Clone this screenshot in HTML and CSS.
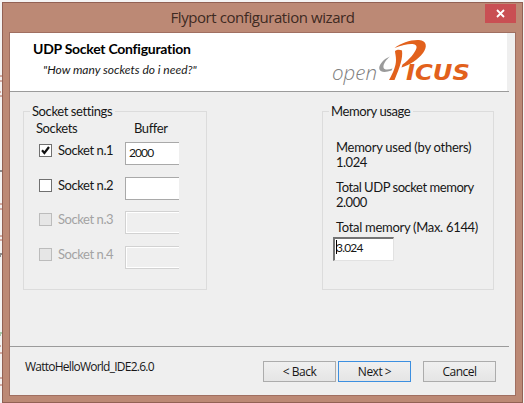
FILE: index.html
```
<!DOCTYPE html>
<html lang="en">
<head>
<meta charset="utf-8">
<title>Flyport configuration wizard</title>
<link rel="stylesheet" href="styles.css">
</head>
<body>
<svg class="backdrop" width="3" height="403" viewBox="0 0 3 403"><path d="M0 76h2M0 81h2M0 92h1M0 96h2M0 204h2M0 209h2M0 236h2M0 240h2M0 346h1M0 353h2M0 378h2M0 385h2" stroke="#b06050"/><path d="M0 171h2M0 254h2M0 256h1" stroke="#222"/><path d="M0 333h2M0 335h1" stroke="#58a060"/></svg>
<main class="window">
  <header class="titlebar">
    <h1>Flyport configuration wizard</h1>
    <button class="close" aria-label="Close"><svg width="9" height="9" viewBox="0 0 9 9"><path d="M1 1l7 7M8 1l-7 7" stroke="#fff" stroke-width="1.8"/></svg></button>
  </header>
  <section class="client">
    <div class="banner">
      <div class="heading">
        <h2>UDP Socket Configuration</h2>
        <p>"How many sockets do i need?"</p>
      </div>
      <svg class="logo" width="142" height="50" viewBox="330 36 142 50">
        <text class="logo-open" x="332" y="80" textLength="45" lengthAdjust="spacingAndGlyphs">open</text>
        <path d="M390 56.5C383 59 378 66 379.5 69.5C380.5 72.5 386 72.5 391.5 70.5L392.5 68.5C388 70 384 70 383.5 67.5C383 64 386 60 390 56.5Z" fill="#9a9a9a"/>
        <path d="M395 51C397.500 49 400 49.500 402 50.500C403 58 400 67 394.500 80H389C393 73 396 66 396 60C396 56 395 53 395 51Z" fill="#e2611c"/>
        <path d="M394.500 48C401 43 411 39.500 419 40C427 40.500 427.500 47 423 53C418 60 409 65 401.500 67.500L402.500 64.500C409 60 415 53 416.500 48C417.500 42.500 408 43 394.500 48Z" fill="#e2611c"/>
        <text class="logo-caps" x="406" y="80" textLength="64" lengthAdjust="spacingAndGlyphs">ICUS</text>
      </svg>
    </div>
    <div class="body">
      <fieldset class="group sockets">
        <legend>Socket settings</legend>
        <div class="cols"><span>Sockets</span><span>Buffer</span></div>
        <div class="row"><i class="check"><svg width="11" height="11" viewBox="0 0 11 11"><path d="M2 5.2L4.400 8L9 2" fill="none" stroke="#111" stroke-width="2.200"/></svg></i><label>Socket n.1</label><div class="field">2000</div></div>
        <div class="row"><i class="check"></i><label>Socket n.2</label><div class="field"></div></div>
        <div class="row off"><i class="check"></i><label>Socket n.3</label><div class="field"></div></div>
        <div class="row off"><i class="check"></i><label>Socket n.4</label><div class="field"></div></div>
      </fieldset>
      <fieldset class="group memory">
        <legend>Memory usage</legend>
        <dl>
          <dt class="used">Memory used (by others)</dt><dd>1.024</dd>
          <dt class="udp">Total UDP socket memory</dt><dd>2.000</dd>
          <dt class="max">Total memory (Max. 6144)</dt>
        </dl>
        <div class="total"><i class="caret"></i>3.024</div>
      </fieldset>
    </div>
    <footer>
      <span class="project">WattoHelloWorld_IDE2.6.0</span>
      <button class="btn">&lt; Back</button>
      <button class="btn next">Next &gt;</button>
      <button class="btn cancel">Cancel</button>
    </footer>
  </section>
</main>
</body>
</html>
```
FILE: styles.css
```
* { box-sizing: border-box; }
body { margin: 0; width: 524px; height: 403px; overflow: hidden; background: #f4f3f3; padding: 2px 1px 0 2px; font: 13px/15px Lato, "Liberation Sans", sans-serif; color: #171717; }
h1, h2, p, dl, dd { margin: 0; font-weight: 400; }
i { font-style: normal; }
button { font: inherit; padding: 0; margin: 0; border-radius: 0; }
.backdrop { position: absolute; left: 0; top: 0; }
.window { position: relative; width: 521px; height: 401px; background: #bc8975; border: 1px solid #926154; padding: 0 6px 6px; }
.titlebar { height: 29px; display: flex; justify-content: center; position: relative; }
h1 { font: 15px/28px "Open Sans", sans-serif; color: #3e2a22; white-space: nowrap; letter-spacing: -.43px; }
.close { position: absolute; right: 0; top: 1px; width: 31px; height: 19px; border: 0; background: #c94f53; display: flex; align-items: center; justify-content: center; }
.client { height: 364px; border: 1px solid #a06f61; background: #efefef; display: flex; flex-direction: column; }
.banner { height: 59px; flex: none; background: linear-gradient(#fff, #fff) 0 0 / 497px 58px no-repeat; display: flex; position: relative; }
.banner::after, footer::before { content: ""; position: absolute; left: 0; bottom: 0; width: 499px; height: 1px; background: #9b9b9b; }
.heading { padding: 7px 0 0 23px; width: 320px; white-space: nowrap; }
h2 { font-size: 14px; line-height: 18px; font-weight: 700; color: #000; letter-spacing: -.26px; }
.heading p { font-size: 12px; line-height: 16px; font-style: italic; margin: 4px 0 0 10px; }
.logo { margin-top: 3px; flex: none; }
.logo-open { font: italic 300 20px "Open Sans"; fill: #808080; }
.logo-caps { font: italic 700 22px "DejaVu Sans"; fill: #e2611c; }
.body { display: flex; padding: 11px 0 0 13px; gap: 115px; height: 254px; flex: none; white-space: nowrap; }
.group { margin: 0; padding: 0; height: 187px; min-width: 0; border: 1px solid #dcdcdc; }
.sockets { width: 184px; }
.memory { width: 172px; }
legend { padding: 0 3px 0 2px; margin-left: 6px; height: 16px; line-height: 16px; letter-spacing: -.4px; }
.cols { display: flex; height: 23px; padding-left: 12px; line-height: 19px; letter-spacing: -.4px; }
.cols span:first-child { width: 98px; }
.row { display: flex; height: 34.5px; padding-left: 15px; align-items: flex-start; }
.check { width: 13px; height: 13px; border: 1px solid #707070; background: #fff; margin-top: 2px; flex: none; display: block; }
.check svg { display: block; }
.row label { width: 67px; margin-left: 6px; line-height: 17px; letter-spacing: -.43px; }
.field { width: 54px; height: 23px; border: 1px solid #a9a9a9; border-right: 0; background: #fff; padding: 0 3px; font-size: 12px; line-height: 20px; letter-spacing: -.9px; }
.off { color: #a3a3a3; }
.off .check { border-color: #bcbcbc; background: #e6e6e6; }
.off .field { border-color: #d2d2d2; background: #efefef; }
.off .field { box-shadow: inset 1px 1px #fff, inset 0 -1px #fff; }
dl { padding: 21px 0 0 13px; }
dt, dd { height: 15px; }
.used { letter-spacing: -.27px; }
.udp { letter-spacing: -.46px; }
.max { letter-spacing: -.3px; }
dd { margin-bottom: 10px; letter-spacing: -.5px; }
.total { position: relative; margin: 2px 0 0 10px; width: 61px; height: 24px; background: #fff; border: 1px solid #e2e2e2; border-top: 2px solid #747474; border-left: 2px solid #747474; padding-left: 1px; font-size: 12px; line-height: 17px; letter-spacing: -.8px; }
.caret { position: absolute; left: 1px; top: 1px; width: 1px; height: 14px; background: #000; }
footer { position: relative; display: flex; flex: 1; padding: 15px 0 0 15px; font: 12px/19px "Open Sans", sans-serif; white-space: nowrap; }
footer::before { top: 0; }
.project { width: 238px; line-height: 12px; letter-spacing: -.75px; }
.btn { width: 73px; height: 21px; border: 1px solid #acacac; background: linear-gradient(#f0f0f0, #e5e5e5); margin-right: 2px; color: #171717; letter-spacing: -.5px; }
.next { border-color: #3c8fe0; }
.cancel { margin-left: 10px; }
```
